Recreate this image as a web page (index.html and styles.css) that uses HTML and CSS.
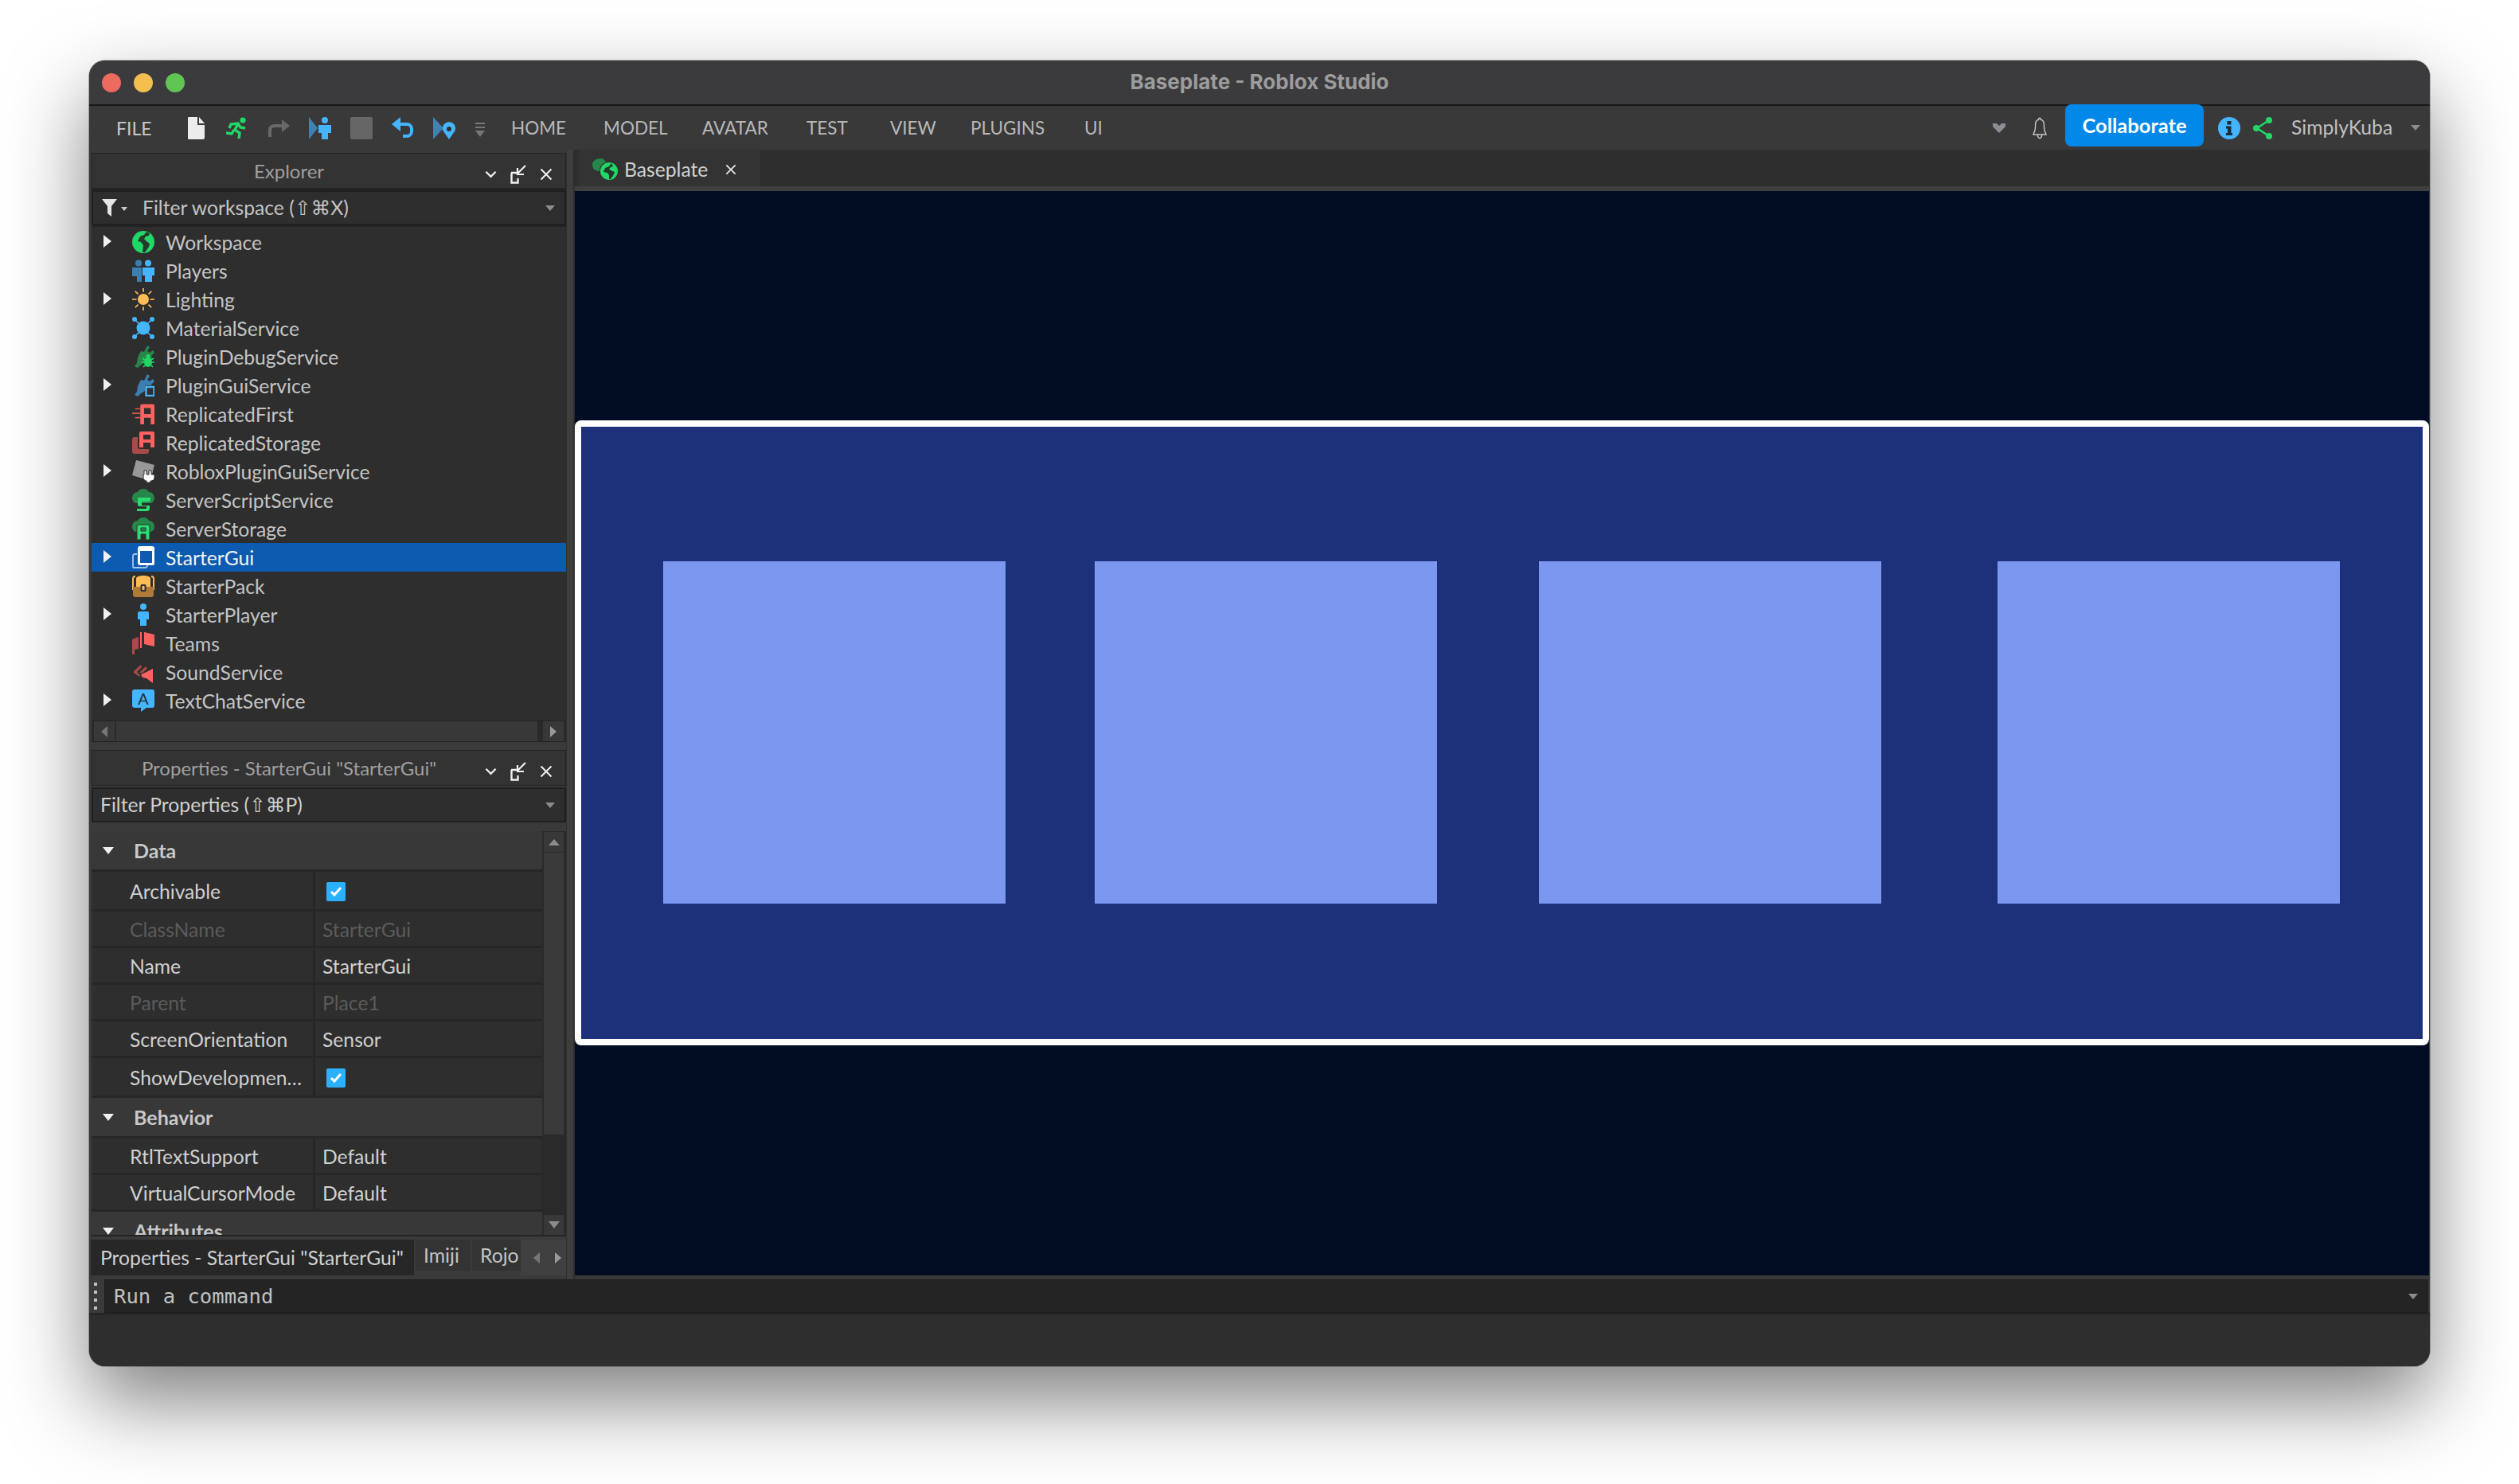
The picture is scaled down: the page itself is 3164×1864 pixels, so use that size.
FILE: index.html
```html
<!DOCTYPE html>
<html lang="en">
<head>
    <meta charset="UTF-8">
    <title>Baseplate - Roblox Studio</title>
    <link rel="stylesheet" href="styles.css">
</head>
<body>
<svg class="sprite" width="0" height="0">
    <symbol id="chevron" viewBox="0 0 16 10"><path d="M1.5 1.5 8 8l6.5-6.5" fill="none" stroke="currentColor" stroke-width="2.4"/></symbol>
    <symbol id="dock" viewBox="0 0 20 24"><path d="M1 10h8M1.5 10v12.5h8V17" fill="none" stroke="currentColor" stroke-width="2.4"/><path d="M19 1 9 11M9 4v8h8" fill="none" stroke="currentColor" stroke-width="2.2"/></symbol>
    <symbol id="close" viewBox="0 0 16 16"><path d="M1.5 1.5l13 13M14.5 1.5l-13 13" fill="none" stroke="currentColor" stroke-width="2"/></symbol>
    <symbol id="plug" viewBox="0 0 28 28"><path d="M19 0l3 2-3 5 3 2 4-3 2 3-4 4 1 3-6 6-3-1-6 4-3 3-4-2 3-4 1-7 4-8 4 1z"/></symbol>
    <symbol id="cloud" viewBox="0 0 28 28"><path d="M14 0c4 0 6 2 7 4 4 0 7 3 7 8 0 3-2 5-4 6H4c-2-1-4-3-4-6 0-5 3-8 7-8 1-2 3-4 7-4z"/></symbol>
</svg>

<div class="window">
    <header class="titlebar">
        <div class="lights">
            <span class="light light-red"></span>
            <span class="light light-yellow"></span>
            <span class="light light-green"></span>
        </div>
        <div class="window-title">Baseplate - Roblox Studio</div>
    </header>

    <nav class="toolbar">
        <span class="file-menu">FILE</span>
        <div class="quick-icons">
            <svg viewBox="0 0 28 28"><path d="M5 0h11v10h9v16a2 2 0 0 1-2 2H5a1 1 0 0 1-1-1V1a1 1 0 0 1 1-1z" fill="#ececec"/><path d="M18 0l7 8h-7z" fill="#ececec"/></svg>
            <svg viewBox="0 0 28 28"><circle cx="21" cy="4" r="3.6" fill="#22d767"/><path d="M4 14l2-5 9-1 3 5 6 1M15 9l-4 7 6 4-1 7M10 16l-3 5-7-1" fill="none" stroke="#22d767" stroke-width="3.4"/></svg>
            <svg viewBox="0 0 28 28"><path d="M3 25v-8c0-4 2-6 6-6h10" fill="none" stroke="#686868" stroke-width="4"/><path d="M18 3l10 8-10 8z" fill="#686868"/></svg>
            <svg viewBox="0 0 28 28"><path d="M0 0l11 14L0 28z" fill="#3f83b2"/><circle cx="20" cy="4" r="4" fill="#45b5ff"/><path d="M12 10h16v10h-4v8h-8v-8h-4z" fill="#45b5ff"/></svg>
            <svg viewBox="0 0 28 28"><rect width="28" height="28" rx="2" fill="#666"/></svg>
            <svg viewBox="0 0 28 28"><path d="M5 9h14a6 6 0 0 1 6 6v3a6 6 0 0 1-6 6h-5" fill="none" stroke="#45b5ff" stroke-width="4"/><path d="M11 0v18L0 9z" fill="#45b5ff"/></svg>
            <svg viewBox="0 0 28 28"><path d="M0 0l13 14L0 28z" fill="#3f83b2"/><path d="M20 28l-7-10a8 8 0 1 1 14 0z" fill="#45b5ff"/><circle cx="20" cy="15" r="3" fill="#2e2e2e"/></svg>
            <svg class="overflow-icon" viewBox="0 0 14 20"><path d="M1 2h12M1 7h12" stroke="#777" stroke-width="2"/><path d="M1 11h12l-6 8z" fill="#777"/></svg>
        </div>
        <div class="menu-tabs">
            <span>HOME</span><span>MODEL</span><span>AVATAR</span><span>TEST</span><span>VIEW</span><span>PLUGINS</span><span>UI</span>
        </div>
        <div class="toolbar-right">
            <svg class="more-icon" viewBox="0 0 16 12"><path d="M0 0h5l3 3 3-3h5v4l-8 8-8-8z" fill="#8b8f94"/></svg>
            <svg class="bell-icon" viewBox="0 0 24 42"><path d="M12 2c-1 0-2 1-2 3-5 1-6 5-6 9 0 8-1 13-3 16l-1 3h24l-1-3c-2-3-3-8-3-16 0-4-1-8-6-9 0-2-1-3-2-3zM8 34c0 3 2 6 4 6s4-3 4-6" fill="none" stroke="#c4c4c4" stroke-width="2.2"/></svg>
            <button class="collab-btn">Collaborate</button>
            <svg class="info-icon" viewBox="0 0 28 28"><circle cx="14" cy="14" r="14" fill="#45b5ff"/><rect x="11.5" y="5" width="5" height="4.5" fill="#1c2a33"/><path d="M10 11.5h6.5V20H18v3h-8v-3h2v-5.5h-2z" fill="#1c2a33"/></svg>
            <svg class="share-icon" viewBox="0 0 24 28"><path d="M20 4 5 14l15 10" fill="none" stroke="#22d767" stroke-width="2.6"/><circle cx="20" cy="4" r="4" fill="#22d767"/><circle cx="4" cy="14" r="4" fill="#22d767"/><circle cx="20" cy="24" r="4" fill="#22d767"/></svg>
            <span class="user-name">SimplyKuba</span>
            <span class="caret caret-user"></span>
        </div>
    </nav>

    <div class="workspace">
        <aside class="sidebar">
            <section class="panel explorer">
                <div class="panel-head">
                    <span class="panel-title">Explorer</span>
                    <div class="panel-tools">
                        <svg class="tool-chevron"><use href="#chevron"/></svg>
                        <svg class="tool-dock"><use href="#dock"/></svg>
                        <svg class="tool-close"><use href="#close"/></svg>
                    </div>
                </div>
                <div class="filter-box filter-tree">
                    <svg class="funnel" viewBox="0 0 32 22"><path d="M0 0h19l-7 9v13l-5-4V9z" fill="#e6e6e6"/><path d="M24 10h8l-4 5z" fill="#c8c8c8"/></svg>
                    <span class="filter-text">Filter workspace (⇧⌘X)</span>
                    <span class="caret"></span>
                </div>
                <ul class="tree">
                    <li class="tree-row has-kids">
                        <svg class="obj-icon" viewBox="0 0 28 28"><circle cx="14" cy="14" r="14" fill="#22d767"/><path d="M18 1l-3 4-5 2-3 6 4 1 3 4-1 9h3l5-7 1-4-4-3-3-3 2-3 4-1 1-3z" fill="#25382c"/></svg>
                        <span>Workspace</span>
                    </li>
                    <li class="tree-row">
                        <svg class="obj-icon" viewBox="0 0 28 28"><circle cx="8" cy="4.5" r="4" fill="#3a7fb0"/><path d="M0 10h12v18H6v-7H0z" fill="#3a7fb0"/><circle cx="20" cy="4.5" r="4" fill="#45b5ff"/><path d="M13 10h15v10h-3v8h-9v-8h-3z" fill="#45b5ff"/></svg>
                        <span>Players</span>
                    </li>
                    <li class="tree-row has-kids">
                        <svg class="obj-icon obj-sun" viewBox="0 0 30 30"><circle cx="15" cy="15" r="7.5" fill="#ffbc57"/><path d="M15 0v5M15 25v5M0 15h6M24 15h6M4 4l4 4M22 22l4 4M26 4l-4 4M8 22l-4 4" stroke="#ffbc57" stroke-width="1.8"/></svg>
                        <span>Lighting</span>
                    </li>
                    <li class="tree-row">
                        <svg class="obj-icon" viewBox="0 0 28 28"><circle cx="14" cy="14" r="8.5" fill="#45b5ff"/><path d="M3 3l6 6M25 3l-6 6M3 25l6-6M25 25l-6-6" stroke="#45b5ff" stroke-width="1.6"/><circle cx="3" cy="3" r="3" fill="#45b5ff"/><circle cx="25" cy="3" r="3" fill="#45b5ff"/><circle cx="3" cy="25" r="3" fill="#45b5ff"/><circle cx="25" cy="25" r="3" fill="#45b5ff"/></svg>
                        <span>MaterialService</span>
                    </li>
                    <li class="tree-row">
                        <svg class="obj-icon" viewBox="0 0 28 28"><use href="#plug" fill="#27874a"/><ellipse cx="20" cy="21" rx="5" ry="6" fill="#22d767"/><circle cx="20" cy="13.5" r="2.5" fill="#22d767"/><path d="M13 16l3 2M27 16l-3 2M12 21h3M28 21h-3M14 27l3-3M26 27l-3-3" stroke="#22d767" stroke-width="1.6"/></svg>
                        <span>PluginDebugService</span>
                    </li>
                    <li class="tree-row has-kids">
                        <svg class="obj-icon" viewBox="0 0 28 28"><use href="#plug" fill="#3a7fb0"/><rect x="16" y="14" width="12" height="14" rx="1" fill="#2e2e2e"/><rect x="17.5" y="16" width="10" height="11" fill="none" stroke="#45b5ff" stroke-width="2.4"/></svg>
                        <span>PluginGuiService</span>
                    </li>
                    <li class="tree-row">
                        <svg class="obj-icon" viewBox="0 0 30 28"><path d="M11 28V3a2 2 0 0 1 2-2h15a2 2 0 0 1 2 2v25h-5v-9h-9v9zM16 6v8h9V6z" fill="#ff6161"/><path d="M4 7h7M0 13h11M4 19h7" stroke="#ff6161" stroke-width="1.8" opacity=".8"/></svg>
                        <span>ReplicatedFirst</span>
                    </li>
                    <li class="tree-row">
                        <svg class="obj-icon" viewBox="0 0 28 28"><path d="M7 7H3a3 3 0 0 0-3 3v15a3 3 0 0 0 3 3h15a3 3 0 0 0 3-3v-3H10a3 3 0 0 1-3-3z" fill="#a84a4a"/><path d="M9 20V2a2 2 0 0 1 2-2h15a2 2 0 0 1 2 2v18h-5v-6h-9v6zM14 4v6h9V4z" fill="#ff6161"/></svg>
                        <span>ReplicatedStorage</span>
                    </li>
                    <li class="tree-row has-kids">
                        <svg class="obj-icon" viewBox="0 0 28 28"><path d="M5 0l23 6-5 20L0 19z" fill="#989898"/><path d="M15 13h3v5h3v-5h3v5h4v4c0 3-3 4-5 4v2h-5v-2c-2 0-4-2-4-4v-4h1z" fill="#fff" stroke="#2e2e2e"/></svg>
                        <span>RobloxPluginGuiService</span>
                    </li>
                    <li class="tree-row">
                        <svg class="obj-icon" viewBox="0 0 28 28"><use href="#cloud" fill="#27874a"/><path d="M7 11h16v3c0 1-1 2-2 2H12v5h10v3c0 2-1 4-3 4H6v-3h12v-3H9c-1 0-2-1-2-2z" fill="#2bdc71"/></svg>
                        <span>ServerScriptService</span>
                    </li>
                    <li class="tree-row">
                        <svg class="obj-icon" viewBox="0 0 28 28"><use href="#cloud" fill="#27874a"/><path d="M6 28V11a2 2 0 0 1 2-2h12a2 2 0 0 1 2 2v17h-5v-7h-6v7zM11 13v4h6v-4z" fill="#2bdc71" stroke="#2e2e2e"/></svg>
                        <span>ServerStorage</span>
                    </li>
                    <li class="tree-row has-kids selected">
                        <svg class="obj-icon" viewBox="0 0 28 28"><path d="M6 10H3a2 2 0 0 0-2 2v14a1 1 0 0 0 1 1h15a3 3 0 0 0 2-2v-2" fill="none" stroke="#a5c6ea" stroke-width="1.8"/><path d="M10 0h15a3 3 0 0 1 3 3v19a2 2 0 0 1-2 2H10a3 3 0 0 1-3-3V3a3 3 0 0 1 3-3zM10 6v15h15V6z" fill="#fff"/></svg>
                        <span>StarterGui</span>
                    </li>
                    <li class="tree-row">
                        <svg class="obj-icon" viewBox="0 0 28 28"><path d="M5 20V5c0-3 4-4 9-4s9 1 9 4v15z" fill="#ffbc57"/><path d="M1 19V5c0-2 1-3 3-3M27 19V5c0-2-1-3-3-3" fill="none" stroke="#ffbc57" stroke-width="2"/><path d="M1 15h26v10a3 3 0 0 1-3 3H4a3 3 0 0 1-3-3z" fill="#b07a36"/><rect x="10.5" y="12" width="7" height="9" rx="1.5" fill="#2e2e2e"/><rect x="12.5" y="14" width="3" height="5" fill="#ffbc57"/></svg>
                        <span>StarterPack</span>
                    </li>
                    <li class="tree-row has-kids">
                        <svg class="obj-icon" viewBox="0 0 28 28"><circle cx="14" cy="4" r="4" fill="#45b5ff"/><path d="M7 12a2 2 0 0 1 2-2h10a2 2 0 0 1 2 2v8h-3v8h-8v-8H7z" fill="#45b5ff"/></svg>
                        <span>StarterPlayer</span>
                    </li>
                    <li class="tree-row">
                        <svg class="obj-icon" viewBox="0 0 28 28"><path d="M0 9l8-3v15l-5 1v6H0z" fill="#a84a4a"/><path d="M10 0h2v20h-2zM15 0l13 3v15l-13-3z" fill="#ff6161"/></svg>
                        <span>Teams</span>
                    </li>
                    <li class="tree-row">
                        <svg class="obj-icon" viewBox="0 0 28 28"><path d="M26 10v18l-8-6-5-1-2-4 5-2z" fill="#ff6161"/><path d="M3 8l7-7M2 13l9-8 1 3-6 6 4 4-1 2-7-5zM9 15l8-8 2 3-6 5z" fill="#a84a4a"/></svg>
                        <span>SoundService</span>
                    </li>
                    <li class="tree-row has-kids">
                        <svg class="obj-icon" viewBox="0 0 28 28"><path d="M3 0h22a3 3 0 0 1 3 3v17a3 3 0 0 1-3 3h-7l-7 5v-5H3a3 3 0 0 1-3-3V3a3 3 0 0 1 3-3z" fill="#45b5ff"/><text class="bubble-letter" x="14" y="19" text-anchor="middle">A</text></svg>
                        <span>TextChatService</span>
                    </li>
                </ul>
                <div class="hscroll">
                    <span class="scroll-btn"><i class="arrow-left"></i></span>
                    <span class="hscroll-thumb"></span>
                    <span class="scroll-btn"><i class="arrow-right"></i></span>
                </div>
            </section>

            <section class="panel properties">
                <div class="panel-head">
                    <span class="panel-title">Properties - StarterGui "StarterGui"</span>
                    <div class="panel-tools">
                        <svg class="tool-chevron"><use href="#chevron"/></svg>
                        <svg class="tool-dock"><use href="#dock"/></svg>
                        <svg class="tool-close"><use href="#close"/></svg>
                    </div>
                </div>
                <div class="filter-box filter-props">
                    <span class="filter-text">Filter Properties (⇧⌘P)</span>
                    <span class="caret"></span>
                </div>
                <div class="prop-area">
                    <div class="prop-list">
                        <div class="prop-section"><i class="arrow-down"></i>Data</div>
                        <div class="prop-row tall">
                            <span class="prop-name">Archivable</span>
                            <span class="prop-value"><span class="check"><svg viewBox="0 0 16 14"><path d="M2 7l4 4 8-9" fill="none" stroke="#fff" stroke-width="3"/></svg></span></span>
                        </div>
                        <div class="prop-row muted"><span class="prop-name">ClassName</span><span class="prop-value">StarterGui</span></div>
                        <div class="prop-row"><span class="prop-name">Name</span><span class="prop-value">StarterGui</span></div>
                        <div class="prop-row muted"><span class="prop-name">Parent</span><span class="prop-value">Place1</span></div>
                        <div class="prop-row"><span class="prop-name">ScreenOrientation</span><span class="prop-value">Sensor</span></div>
                        <div class="prop-row tall">
                            <span class="prop-name">ShowDevelopmen…</span>
                            <span class="prop-value"><span class="check"><svg viewBox="0 0 16 14"><path d="M2 7l4 4 8-9" fill="none" stroke="#fff" stroke-width="3"/></svg></span></span>
                        </div>
                        <div class="prop-section"><i class="arrow-down"></i>Behavior</div>
                        <div class="prop-row"><span class="prop-name">RtlTextSupport</span><span class="prop-value">Default</span></div>
                        <div class="prop-row"><span class="prop-name">VirtualCursorMode</span><span class="prop-value">Default</span></div>
                        <div class="prop-section"><i class="arrow-down"></i>Attributes</div>
                    </div>
                    <div class="vscroll">
                        <span class="vscroll-btn"><i class="arrow-up"></i></span>
                        <span class="vscroll-thumb"></span>
                        <span class="vscroll-track"></span>
                        <span class="vscroll-btn"><i class="arrow-down small"></i></span>
                    </div>
                </div>
            </section>

            <div class="dock-tabs">
                <span class="dock-tab current">Properties - StarterGui "StarterGui"</span>
                <span class="dock-tab imiji">Imiji</span>
                <span class="dock-tab rojo">Rojo</span>
                <span class="dock-arrows"><i class="arrow-left"></i><i class="arrow-right"></i></span>
            </div>
        </aside>

        <div class="splitter"></div>

        <main class="main">
            <div class="doc-tabs">
                <div class="doc-tab">
                    <svg class="doc-icon" viewBox="0 0 32 28"><path d="M10 0c4 0 6 2 7 5-5 1-8 5-8 11-4 0-9-2-9-8 0-5 5-8 10-8z" fill="#27874a"/><circle cx="21" cy="16" r="11" fill="#22d767"/><path d="M24 6l-3 4-5 2-2 5 5 1 2 3v5h2l4-6 1-3-5-2-2-2 2-2 3-1z" fill="#25382c"/></svg>
                    <span>Baseplate</span>
                    <svg class="doc-close"><use href="#close"/></svg>
                </div>
            </div>
            <div class="viewport">
                <div class="screen-frame">
                    <div class="card"></div>
                    <div class="card card-two"></div>
                    <div class="card card-three"></div>
                    <div class="card card-four"></div>
                </div>
            </div>
        </main>
    </div>

    <div class="commandbar">
        <span class="grip"><i></i><i></i><i></i><i></i></span>
        <div class="command-input">
            <span>Run a command</span>
            <span class="caret"></span>
        </div>
    </div>
    <div class="statusbar"></div>
</div>
</body>
</html>
```

FILE: styles.css
```css
* {
    box-sizing: border-box;
}

body {
    margin: 0;
    padding: 76px 112px 148px;
    background-color: #fff;
    font-family: Lato, "DejaVu Sans", sans-serif;
    font-size: 24.7px;
    color: #c8c8c8;
}

.sprite {
    position: absolute;
}

svg {
    display: block;
    flex: none;
    fill: currentColor;
}

i {
    display: block;
}

.window {
    width: 2940px;
    height: 1640px;
    background-color: #2e2e2e;
    border-radius: 20px;
    overflow: hidden;
    box-shadow: 0 44px 100px rgba(0, 0, 0, 0.5), 0 0 0 1px rgba(0, 0, 0, 0.25);
    display: flex;
    flex-direction: column;
}

/* title bar */
.titlebar {
    height: 57px;
    flex: none;
    background-color: #3b3b3d;
    border-bottom: 2px solid #171717;
    position: relative;
    display: flex;
    align-items: center;
    justify-content: center;
    padding-bottom: 3px;
}

.lights {
    position: absolute;
    left: 16px;
    top: 16px;
    display: flex;
    gap: 16px;
}

.light {
    width: 24px;
    height: 24px;
    border-radius: 50%;
}

.light-red { background-color: #ed6a5e; }
.light-yellow { background-color: #f4bf4f; }
.light-green { background-color: #61c554; }

.window-title {
    font-family: Inter, sans-serif;
    font-size: 26px;
    font-weight: 700;
    color: #9c9c9c;
}

/* toolbar */
.toolbar {
    height: 55px;
    flex: none;
    background-color: #393939;
    display: flex;
    align-items: center;
}

.file-menu {
    margin-left: 34px;
    width: 86px;
    font-size: 23px;
    color: #c8c8c8;
}

.quick-icons {
    display: flex;
    align-items: center;
    gap: 24px;
}

.quick-icons svg {
    width: 28px;
    height: 28px;
}

.quick-icons .overflow-icon {
    width: 14px;
    height: 20px;
    margin-top: 4px;
}

.menu-tabs {
    display: grid;
    grid-template-columns: 116px 124px 131px 105px 101px 143px 40px;
    margin-left: 32px;
    font-size: 22.5px;
    color: #b8b8b8;
}

.toolbar-right {
    margin-left: auto;
    display: flex;
    align-items: center;
    height: 100%;
}

.more-icon {
    width: 16px;
    height: 12px;
    margin-right: 31px;
}

.bell-icon {
    width: 24px;
    height: 28px;
    margin-right: 20px;
}

.collab-btn {
    width: 174px;
    height: 53px;
    margin-top: -2px;
    align-self: flex-start;
    position: relative;
    background-color: #0288e8;
    color: #fff;
    border: none;
    border-radius: 8px;
    font-family: Lato, sans-serif;
    font-size: 25.5px;
    font-weight: 700;
    padding: 0 0 2px;
}

.info-icon {
    width: 28px;
    height: 28px;
    margin-left: 18px;
}

.share-icon {
    width: 24px;
    height: 28px;
    margin-left: 16px;
}

.user-name {
    width: 150px;
    margin-left: 24px;
    padding-bottom: 3px;
    color: #c0c0c0;
}

.caret {
    display: block;
    width: 0;
    height: 0;
    border-left: 6px solid transparent;
    border-right: 6px solid transparent;
    border-top: 7px solid #8c8c8c;
    flex: none;
}

.caret-user {
    margin-right: 12px;
}

/* layout */
.workspace {
    height: 1419px;
    flex: none;
    display: flex;
}

.sidebar {
    width: 599px;
    flex: none;
    padding-top: 4px;
    background-color: #3a3a3a;
}

.splitter {
    width: 11px;
    flex: none;
    background-color: #3e3e3e;
    border-left: 1px solid #2e2e2e;
    border-right: 2px solid #2e2e2e;
}

.main {
    flex: 1;
    display: flex;
    flex-direction: column;
    min-width: 0;
    padding-right: 1px;
    padding-bottom: 5px;
    background-color: #3a3a3a;
}

/* panels */
.panel {
    margin-left: 3px;
    background-color: #232323;
}

.explorer {
    height: 740px;
    border-bottom: 2px solid #232323;
}

.properties {
    margin-top: 10px;
    height: 615px;
    background-color: #3a3a3a;
}

.panel-head {
    height: 45px;
    background-color: #333;
    border: 1px solid #232323;
    padding-right: 100px;
    display: flex;
    align-items: center;
    justify-content: center;
    position: relative;
    color: #a0a0a0;
    font-size: 24px;
}

.panel-tools {
    position: absolute;
    right: 16px;
    top: 14px;
    display: flex;
    align-items: center;
    gap: 17px;
    color: #f0f0f0;
}

.tool-chevron {
    width: 15px;
    height: 10px;
}

.tool-dock {
    width: 20px;
    height: 24px;
}

.tool-close {
    width: 16px;
    height: 16px;
}

.filter-box {
    height: 44px;
    background-color: #2e2e2e;
    border: 2px solid #1f1f1f;
    display: flex;
    align-items: center;
    color: #c4c4c4;
    margin-top: 2px;
}

.filter-box .filter-text {
    flex: 1;
}

.filter-box .caret {
    margin-right: 12px;
}

.filter-tree {
    padding-left: 11px;
}

.filter-props {
    padding-left: 9px;
    color: #cfcfcf;
    margin-bottom: 11px;
}

.funnel {
    width: 32px;
    height: 22px;
    margin-right: 19px;
}

/* tree */
.tree {
    list-style: none;
    margin: 2px 0 0;
    padding: 1px 0 0;
    height: 620px;
    background-color: #2e2e2e;
}

.tree-row {
    height: 36px;
    display: flex;
    align-items: center;
    padding-left: 51px;
    position: relative;
    color: #c4c4c4;
}

.tree-row.has-kids::before {
    content: "";
    position: absolute;
    left: 15px;
    top: 9px;
    border-top: 8px solid transparent;
    border-bottom: 8px solid transparent;
    border-left: 10px solid #f0f0f0;
}

.tree-row.selected {
    background-color: #0d5bb0;
    color: #f2f2f2;
}

.obj-icon {
    width: 28px;
    height: 28px;
    margin-right: 14px;
}

.bubble-letter {
    font-family: "Liberation Sans", sans-serif;
    font-size: 20px;
    fill: #24323c;
}

.hscroll {
    height: 27px;
    display: flex;
    gap: 2px;
    padding: 0 3px;
    background-color: #2a2a2a;
    border-top: 1px solid #232323;
    border-bottom: 1px solid #232323;
}

.scroll-btn {
    width: 26px;
    background-color: #383838;
    display: flex;
    align-items: center;
    justify-content: center;
}

.hscroll-thumb {
    flex: 1;
    margin-right: 5px;
    background-color: #383838;
}

.arrow-left {
    border-top: 7px solid transparent;
    border-bottom: 7px solid transparent;
    border-right: 8px solid #777;
}

.arrow-right {
    border-top: 7px solid transparent;
    border-bottom: 7px solid transparent;
    border-left: 8px solid #9a9a9a;
}

.arrow-up {
    border-left: 7px solid transparent;
    border-right: 7px solid transparent;
    border-bottom: 8px solid #8c8c8c;
}

.arrow-down {
    border-left: 7px solid transparent;
    border-right: 7px solid transparent;
    border-top: 9px solid #f0f0f0;
}

.arrow-down.small {
    border-top-color: #8c8c8c;
}

/* properties */
.prop-area {
    height: 509px;
    display: flex;
    overflow: hidden;
    border-bottom: 2px solid #232323;
    background-color: #252525;
}

.prop-list {
    width: 566px;
    flex: none;
}

.prop-section {
    height: 51px;
    background-color: #383838;
    border-bottom: 3px solid #262626;
    display: flex;
    align-items: center;
    padding-left: 14px;
    font-size: 25px;
    font-weight: 700;
    color: #c8c8c8;
}

.prop-section i {
    margin-right: 25px;
}

.prop-row {
    height: 46px;
    display: grid;
    grid-template-columns: 281px 1fr;
    background-color: #2e2e2e;
    border-bottom: 3px solid #262626;
    color: #d0d0d0;
}

.prop-row.tall {
    height: 50px;
}

.prop-row.muted {
    color: #5b5b5b;
}

.prop-name {
    padding: 2px 0 0 48px;
    border-right: 3px solid #262626;
    display: flex;
    align-items: center;
    white-space: nowrap;
}

.prop-value {
    padding: 2px 0 0 9px;
    display: flex;
    align-items: center;
}

.check {
    width: 24px;
    height: 24px;
    margin-left: 5px;
    border-radius: 2px;
    background-color: #2bb1ff;
    display: flex;
    align-items: center;
    justify-content: center;
}

.check svg {
    width: 16px;
    height: 14px;
}

.vscroll {
    flex: 1;
    display: flex;
    flex-direction: column;
    padding: 1px 3px 0 2px;
    background-color: #2a2a2a;
}

.vscroll-btn {
    height: 25px;
    flex: none;
    background-color: #383838;
    display: flex;
    align-items: center;
    justify-content: center;
}

.vscroll-thumb {
    height: 354px;
    margin-top: 1px;
    background-color: #3a3a3a;
}

.vscroll-track {
    flex: 1;
}

/* bottom dock tabs */
.dock-tabs {
    height: 49px;
    display: flex;
    padding-left: 2px;
    border-bottom: 4px solid #3a3a3a;
    font-size: 24.7px;
}

.dock-tab {
    display: flex;
    align-items: center;
    color: #c4c4c4;
}

.dock-tab.current {
    width: 406px;
    padding-left: 12px;
    background-color: #272727;
    color: #d0d0d0;
    white-space: nowrap;
}

.imiji,
.rojo {
    background-color: #333;
    height: 39px;
    margin-left: 2px;
    padding-left: 10px;
}

.imiji {
    width: 69px;
}

.rojo {
    width: 61px;
    overflow: hidden;
}

.dock-arrows {
    flex: 1;
    background-color: #404040;
    display: flex;
    align-items: center;
    justify-content: space-between;
    padding: 0 6px 0 16px;
}

/* document area */
.doc-tabs {
    height: 52px;
    flex: none;
    padding-left: 5px;
    background-color: #2e2e2e;
    border-bottom: 6px solid #3f3f3f;
}

.doc-tab {
    width: 228px;
    height: 46px;
    display: flex;
    align-items: center;
    padding: 3px 0 0 17px;
    background-color: #333;
    color: #d0d0d0;
}

.doc-icon {
    width: 32px;
    height: 28px;
    margin-right: 8px;
}

.doc-close {
    width: 14px;
    height: 14px;
    margin-left: 22px;
    color: #e8e8e8;
}

.viewport {
    flex: 1;
    padding-top: 288px;
    background-color: #020c22;
}

.screen-frame {
    height: 785px;
    border: 8px solid #fff;
    border-radius: 8px;
    background-color: #1d317a;
    padding-top: 169px;
    padding-left: 103px;
    display: flex;
    align-items: flex-start;
}

.card {
    width: 430px;
    height: 430px;
    flex: none;
    background-color: #7b97ef;
}

.card-two { margin-left: 112px; }
.card-three { margin-left: 128px; }
.card-four { margin-left: 146px; }

/* command bar */
.commandbar {
    height: 45px;
    flex: none;
    display: flex;
    background-color: #3a3a3a;
    border-bottom: 3px solid #262626;
}

.grip {
    width: 19px;
    flex: none;
    display: flex;
    flex-direction: column;
    justify-content: center;
    gap: 6px;
    padding-left: 6px;
}

.grip i {
    width: 4px;
    height: 4px;
    background-color: #c0c0c0;
}

.command-input {
    flex: 1;
    margin-right: 2px;
    padding: 0 12px 0 11px;
    display: flex;
    align-items: center;
    justify-content: space-between;
    background-color: #242424;
    border: 1px solid #1c1c1c;
    font-family: "DejaVu Sans Mono", monospace;
    font-size: 25.6px;
    color: #c0c0c0;
}

.statusbar {
    flex: 1;
    background-color: #2e2e2e;
}
```
